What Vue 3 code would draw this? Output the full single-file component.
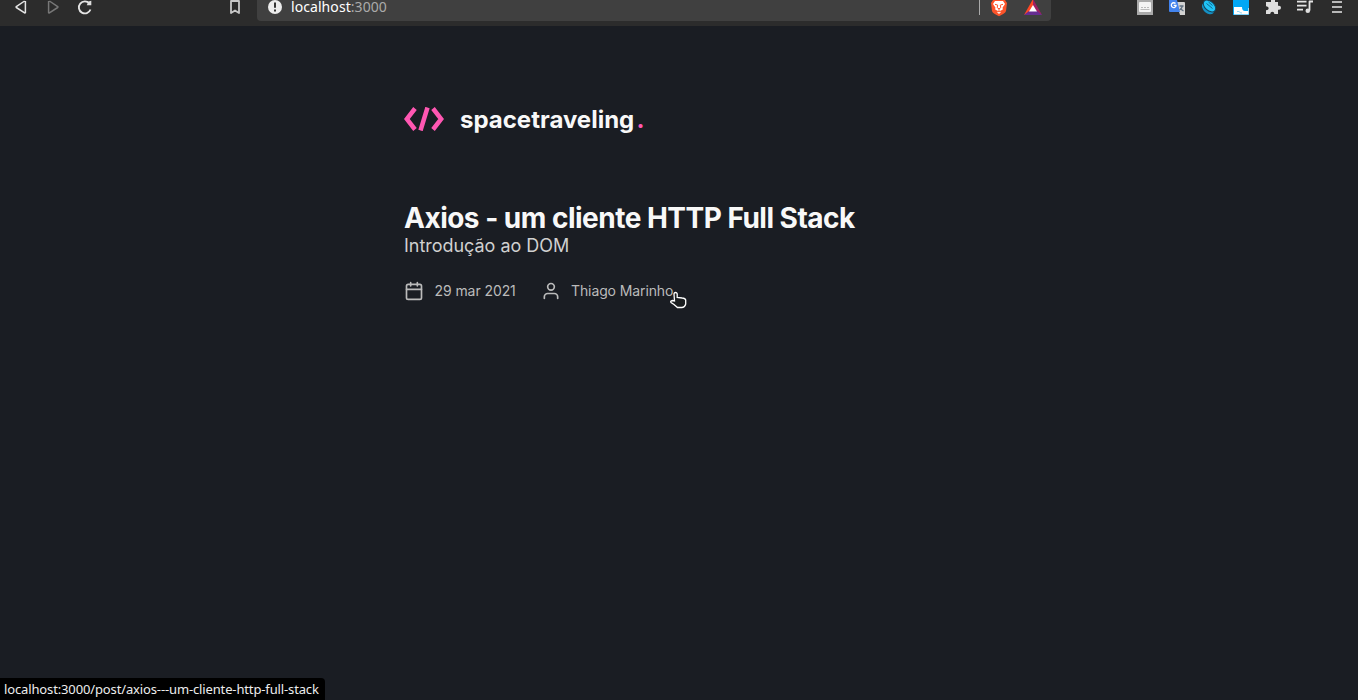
<script setup>
const title = 'Axios - um cliente HTTP Full Stack'
</script>

<template>
  <div class="window">
    <header class="toolbar">
      <nav class="navigation">
        <svg viewBox="0 0 16 16"><path class="line" d="M12.400 1v11.700q-.3.500-.8.200L3.300 7.500q-.5-.4 0-.8L11.600 1" /></svg>
        <svg class="muted" viewBox="0 0 16 16"><path class="line" d="M3.600 1v11.700q.3.500.8.200l8.300-5.400q.5-.4 0-.8L4.400 1" /></svg>
        <svg viewBox="0 0 16 16"><path class="line heavy" d="M12.400 3.500A6 6 0 1 0 13.500 9.500" /><path class="solid" d="M9.800 5.300h4.500V.8l-3 .7z" /></svg>
      </nav>
      <svg class="bookmark" viewBox="0 0 16 16"><path class="line heavy" d="M4 1h8v12l-4-2.500-4 2.500z" /></svg>
      <div class="address">
        <svg class="info" viewBox="0 0 16 16"><circle cx="8" cy="7" r="7" /><path d="M8 2.400v5.400M8 9.400v2" /></svg>
        <span class="url">localhost<span>:3000</span></span>
        <i class="divider"></i>
        <svg class="lion" viewBox="0 0 18 18">
          <path fill="#fb542b" d="M3 0h12l2 3-1 8c-.4 2-3.800 3.700-7 5.300C5.800 14.700 2.400 13 2 11L1 3z" />
          <path fill="#fff" d="M5 1h8l2 3-2.400 3.500.2 2-2.300 1.200.5 1.300-2 1.900-2-1.900.5-1.300-2.300-1.200.2-2L3 4z" />
          <path d="M5 4.300l2.700.8-.5 2.500L9 8.900l1.800-1.300-.5-2.500 2.700-.8M9 9v2.500M7 11.200l2 .6 2-.6" fill="none" stroke="#fb542b" />
        </svg>
        <svg class="bat" viewBox="0 0 18 18">
          <path fill="#ff4724" d="M9-1L0 15l9-4z" /><path fill="#9e1f63" d="M9-1l9 16-9-4z" />
          <path fill="#662d91" d="M0 15l5-4h8l5 4z" /><path fill="#fff" d="M9 5l4 6.500H5z" />
        </svg>
      </div>
      <div class="extensions">
        <svg viewBox="0 0 16 16"><path fill="#aaa" d="M0 0h16v15H0z" /><rect x="2" y="2" width="12" height="10" rx="1" fill="#f4f4f4" /><path d="M4 7.500h2m1 0h2m1 0h2M3.500 9.500h9" stroke="#bbb" /></svg>
        <svg viewBox="0 0 16 16"><path fill="#d2d2d2" d="M7 2h8a1 1 0 0 1 1 1v12h-5z" /><path fill="#4283ed" d="M0 0h8l3 12H1a1 1 0 0 1-1-1z" /><path d="M6.500 3.500A2.400 2.400 0 1 0 7 6V5.300H4.700" fill="none" stroke="#fff" stroke-width="1.300" /><path d="M10.500 6h4m-1 0q-1 3-3 4m1-2q1 2 3 3" fill="none" stroke="#607080" stroke-width="1.300" /></svg>
        <svg viewBox="0 0 16 16">
          <ellipse cx="7" cy="8.500" rx="7" ry="4.600" transform="rotate(42 7 8.500)" fill="#1590c4" />
          <ellipse cx="8.500" cy="6" rx="7.200" ry="4.600" transform="rotate(42 8.500 6)" fill="#20c4f7" stroke="#17435b" />
          <path d="M5.500 3.500l6 5M7.500 2l4 3.500" stroke="#16668c" />
        </svg>
        <svg viewBox="0 0 16 16"><path fill="#00a7f5" d="M0 0h16v15H0z" /><path fill="#fff" d="M1 7h8q0 4 3 4h3V8h.6v6.500H1z" /><path d="M4 11.500h2q1 1.500 3 1.500" fill="none" stroke="#59c4f4" stroke-width=".7" /></svg>
        <svg viewBox="0 0 16 16"><path class="solid" d="M2 2h4V0h4v2h3v3.800h1a2 2 0 0 1 0 4h-1V14H9.300c0-3-4-3-4 0H1v-3.700c3.500 0 3.500-4 0-4V2z" /></svg>
        <svg viewBox="0 0 16 16"><path class="line heavy" d="M0 1.700h9.500M0 5.700h9.500M0 9.700h6M12.500 10.500v-9H16" /><circle class="solid" cx="10.800" cy="10.700" r="2.300" /></svg>
        <svg viewBox="0 0 16 16"><path d="M3 2h10M3 7h10M3 12h10" stroke="#b8b8b8" stroke-width="2" /></svg>
      </div>
    </header>
    <main class="page">
      <div class="brand">
        <svg viewBox="0 0 40 24"><path d="M11 1.500L2.800 12 11 22.500M29 1.500L37.200 12 29 22.500M23.500.5l-7 23" /></svg>
        <span class="name">spacetraveling</span><span class="dot">.</span>
      </div>
      <article>
        <h1>{{ title }}</h1>
        <p>Introdução ao DOM</p>
        <div class="meta">
          <svg viewBox="0 0 24 24"><rect x="3" y="4" width="18" height="18" rx="2" /><path d="M16 2v4M8 2v4M3 10h18" /></svg>
          <time>29 mar 2021</time>
          <svg class="user" viewBox="0 0 24 24"><path d="M20 21v-2a4 4 0 0 0-4-4H8a4 4 0 0 0-4 4v2" /><circle cx="12" cy="7" r="4" /></svg>
          <span class="author">Thiago Marinho</span>
        </div>
      </article>
    </main>
    <svg class="pointer" viewBox="0 0 17 18"><path d="M5.500 1.500c1 0 1.700.7 1.700 1.500v3.500l5 .5q3 .2 3.500 2v4q-1 3.500-4 3.500H7.500L4 13.500l-3-2q-1-1.500 1.500-2l2 .5L4 3q0-1.500 1.500-1.500z" /></svg>
    <footer><span>localhost:3000/post/axios---um-cliente-http-full-stack</span></footer>
  </div>
</template>

<style>
body { margin: 0; background: #1a1d23; }
</style>
<style scoped>
.window { position: relative; height: 700px; display: flex; flex-direction: column; overflow: hidden; background: #1a1d23; font-family: Inter, sans-serif; }
svg { display: block; flex: none; }
.toolbar { height: 26px; flex: none; display: flex; align-items: flex-start; background: #2c2c2c; }
.toolbar svg { width: 16px; height: 16px; }
.navigation { display: flex; gap: 16px; margin-left: 13px; }
.line { fill: none; stroke: #e4e4e4; stroke-width: 1.5; stroke-linejoin: round; }
.heavy { stroke-width: 1.8; }
.solid { fill: #dedede; }
.muted .line { stroke: #777; }
.bookmark { margin-left: 134px; }
.bookmark .line { stroke: #c8c8c8; }
.address { width: 794px; height: 21px; display: flex; align-items: flex-start; margin-left: 14px; background: #404040; border-radius: 0 0 4px 4px; }
.info { margin-left: 10px; }
.info circle { fill: #ececec; }
.info path { stroke: #333; stroke-width: 2; }
.url { margin-left: 8px; width: 110px; font: 14px/14px "Noto Sans", sans-serif; letter-spacing: .07px; color: #fff; }
.url span { color: #aaa; }
.divider { width: 1px; height: 15px; margin-left: 578px; background: #aaa; }
.toolbar .lion { width: 18px; height: 18px; margin-left: 10px; }
.toolbar .bat { width: 18px; height: 18px; margin-left: 16px; }
.extensions { display: flex; gap: 16px; margin-left: 86px; }
.page { width: 550px; margin-left: 404px; }
.brand { height: 24px; display: flex; align-items: center; margin-top: 81px; font-weight: 700; font-size: 24px; color: #f8f8f8; }
.brand svg { width: 40px; height: 24px; margin-right: 16px; }
.brand path { fill: none; stroke: #ff57b2; stroke-width: 4.5; }
.name { width: 176.500px; white-space: nowrap; }
.dot { color: #ff57b2; }
h1 { margin: 70px 0 0; font-size: 28px; line-height: 34px; letter-spacing: -.51px; font-weight: 700; color: #f8f8f8; white-space: nowrap; }
p { font-size: 18px; line-height: 22px; margin: 0; letter-spacing: -.03px; color: #d0d0d0; }
.meta { height: 20px; display: flex; align-items: center; margin-top: 23px; font-size: 14px; letter-spacing: -.08px; color: #bbb; white-space: nowrap; }
.meta svg { width: 20px; height: 20px; margin-top: 2px; fill: none; stroke: #bbb; stroke-width: 2; stroke-linecap: round; stroke-linejoin: round; }
time { width: 83px; margin-left: 10.500px; }
.meta .user { margin-left: 23.500px; }
.author { margin-left: 10px; letter-spacing: -.11px; }
.pointer { position: absolute; left: 670px; top: 290.5px; width: 17px; height: 18px; }
.pointer path { fill: #1a1d1f; stroke: #fff; stroke-width: 1.3; }
footer { width: 325px; height: 22px; margin-top: auto; box-sizing: border-box; padding-left: 4px; background: #000; border-top-right-radius: 4px; color: #ededed; font: 13px/22px "Noto Sans", sans-serif; letter-spacing: -.135px; white-space: nowrap; }
</style>
